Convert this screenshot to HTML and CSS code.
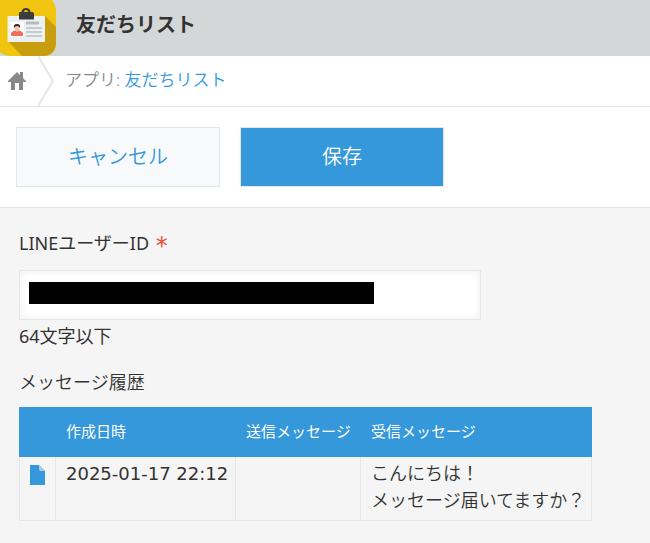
FILE: index.html
```html
<!DOCTYPE html>
<html lang="ja">
<head>
<meta charset="utf-8">
<meta name="viewport" content="width=device-width, initial-scale=1">
<title>友だちリスト</title>
<link rel="stylesheet" href="styles.css">
</head>
<body>
<header class="app-header">
  <svg class="app-icon" viewBox="0 0 56 56" aria-hidden="true">
    <path fill="#f1c40f" d="M0 0H52Q56 5 56 12V42Q56 56 42 56H12Q4 56 0 52Z"/>
    <path fill="#c99d10" d="M45 16L56 27V42Q56 56 42 56H22L8 41Z"/>
    <rect x="7.500" y="16" width="37.500" height="26" rx="1" fill="#ecf0f1"/>
    <rect x="10" y="22" width="14" height="15" fill="#fff"/>
    <path fill="#f26c5e" d="M11 36V33Q12 31 17 30Q22 31 23 33V36Z"/>
    <path fill="#f0b9a0" d="M15 28H19V31L17 32L15 31Z"/>
    <circle cx="17" cy="27" r="2.500" fill="#f3c3aa"/>
    <path fill="#3b2a2a" d="M14 28Q13 24 17 24Q21 24 20 28Q19 26 17 26Q15 26 14 28Z"/>
    <path stroke="#b4bcc0" stroke-width="3" d="M26 23H39"/>
    <path stroke="#c5ccd0" stroke-width="2" d="M26 28H42M26 32H42M26 36H42"/>
    <path fill="#3c3c3c" fill-rule="evenodd" d="M20 12H21.500Q22 8 26 8Q30 8 30.500 12H32Q34 12 34 14V19.500H19V14Q19 12 20 12ZM24 12H28Q28 10 26 10Q24 10 24 12Z"/>
  </svg>
  <h1 class="app-title">友だちリスト</h1>
</header>
<nav class="breadcrumb">
  <a class="home" href="#" aria-label="ホーム">
    <svg width="18" height="20" viewBox="0 0 18 20" aria-hidden="true">
      <path fill="#888" d="M9 1L12 4V1H15V7L18 10V11H15V19H11V12H7V19H3V11H0V10Z"/>
    </svg>
  </a>
  <svg class="chevron" width="16" height="50" viewBox="0 0 16 50" aria-hidden="true">
    <path fill="none" stroke="#e3e7e8" stroke-width="2" d="M0 0L15 25L0 50"/>
  </svg>
  <span class="crumb">アプリ: <a href="#">友だちリスト</a></span>
</nav>
<form class="record">
  <div class="toolbar">
    <button class="button" type="button">キャンセル</button>
    <button class="button button-primary" type="submit">保存</button>
  </div>
  <main class="content">
    <label class="label" for="line-user-id">LINEユーザーID <span class="required">*</span></label>
    <div class="field">
      <input class="text-input" id="line-user-id" type="text" maxlength="64" aria-describedby="id-help">
      <span class="mask"></span>
    </div>
    <p class="help" id="id-help">64文字以下</p>
    <h2 class="label table-label" id="history">メッセージ履歴</h2>
    <table class="history" aria-labelledby="history">
      <colgroup><col class="col-icon"><col class="col-date"><col class="col-sent"><col class="col-received"></colgroup>
      <thead>
        <tr><th></th><th>作成日時</th><th>送信メッセージ</th><th>受信メッセージ</th></tr>
      </thead>
      <tbody>
        <tr>
          <td class="icon-cell"><svg width="15" height="20" viewBox="0 0 15 20" aria-hidden="true"><path fill="#3498db" d="M0 0H9L15 6V20H0Z"/><path fill="#a9d1ee" d="M9 0L15 6H11Q9 6 9 4Z"/></svg></td>
          <td class="date-cell">2025-01-17 22:12</td>
          <td></td>
          <td>こんにちは！<br>メッセージ届いてますか？</td>
        </tr>
      </tbody>
    </table>
  </main>
</form>
</body>
</html>
```
FILE: styles.css
```css
* {
  box-sizing: border-box;
}

body {
  margin: 0;
  background: #f5f5f5;
  color: #333;
  font-family: "Noto Sans", "Noto Sans CJK JP", sans-serif;
  font-size: 17px;
  font-weight: 350;
  line-height: 27px;
}

a {
  color: #3498db;
  text-decoration: none;
}

.app-header {
  display: flex;
  align-items: center;
  gap: 20px;
  height: 56px;
  background: #d4d7d7;
}

.app-icon {
  width: 56px;
  height: 56px;
}

.app-title {
  margin: 0 0 8px;
  font-size: 20px;
  font-weight: 700;
}

.breadcrumb {
  display: flex;
  align-items: center;
  height: 51px;
  border-bottom: 1px solid #e3e7e8;
  background: #fff;
  color: #888;
}

.home {
  display: flex;
  width: 38px;
  padding-left: 8px;
}

.crumb {
  padding: 0 0 4px 11px;
}

.toolbar {
  display: flex;
  gap: 20px;
  padding: 20px 16px;
  border-bottom: 1px solid #e3e7e8;
  background: #fff;
}

.button {
  width: 204px;
  height: 60px;
  padding: 0 0 2px;
  border: 1px solid #e3e7e8;
  background: #f7f9fa;
  color: #3498db;
  font: inherit;
  font-size: 20px;
}

.button-primary {
  background: #3498db;
  color: #fff;
}

.content {
  padding: 22px 19px;
}

.label {
  display: block;
  margin: 0;
  font-size: 18px;
  font-weight: 400;
}

.required {
  margin-left: 2px;
  color: #e74c3c;
  font-family: "DejaVu Sans", sans-serif;
  font-size: 24px;
  line-height: 20px;
  vertical-align: -4px;
}

.field {
  position: relative;
  max-width: 462px;
  margin-top: 13px;
}

.text-input {
  display: block;
  width: 100%;
  height: 50px;
  padding: 0 10px;
  border: 1px solid #e3e7e8;
  background: #fff;
  box-shadow: inset 0 0 8px #eee;
  font: inherit;
}

.mask {
  position: absolute;
  top: 12px;
  left: 10px;
  width: 345px;
  height: 22px;
  background: #000;
}

.help {
  margin: 3px 0 0;
  font-size: 18px;
  font-weight: 400;
}

.table-label {
  margin-top: 19px;
  font-weight: 350;
}

.history {
  margin-top: 11px;
  border-spacing: 0;
  table-layout: fixed;
  width: 573px;
}

.col-icon {
  width: 37px;
}

.col-date {
  width: 180px;
}

.col-sent {
  width: 125px;
}

.history th {
  height: 50px;
  padding: 0 10px 2px;
  background: #3498db;
  color: #fff;
  font-size: 15px;
  font-weight: 400;
  text-align: left;
  white-space: nowrap;
}

.history td {
  height: 64px;
  padding: 3px 0 6px 10px;
  border: 1px solid #e3e7e8;
  border-width: 0 1px 1px 0;
  font-size: 18px;
  vertical-align: top;
  white-space: nowrap;
}

.history .icon-cell {
  padding-top: 8px;
  border-left-width: 1px;
}

.history .date-cell {
  font-family: "DejaVu Sans", sans-serif;
  font-weight: 400;
}

.icon-cell svg {
  display: block;
}
```
